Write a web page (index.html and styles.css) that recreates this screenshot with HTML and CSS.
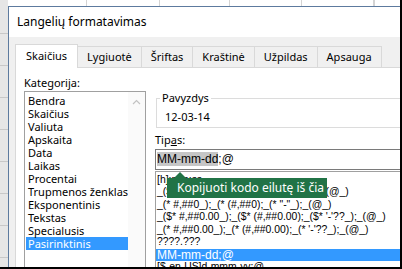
FILE: index.html
```html
<!DOCTYPE html>
<html lang="lt">
<head>
    <meta charset="UTF-8">
    <meta name="viewport" content="width=device-width, initial-scale=1.0">
    <title>Langelių formatavimas</title>
    <link rel="stylesheet" href="styles.css">
</head>
<body>
    <div class="screen">
        <div class="corner"></div>
        <div class="col-heads">
            <span class="col w79"></span>
            <span class="col w73"></span>
            <span class="col w70"></span>
            <span class="col w72"></span>
            <span class="col w72"></span>
            <span class="col"></span>
        </div>
        <div class="row-heads"></div>

        <div class="dialog">
            <div class="titlebar">Langelių formatavimas</div>
            <div class="dialog-body">
                <div class="tabs">
                    <span class="tab active">Skaičius</span>
                    <span class="tab">Lygiuotė</span>
                    <span class="tab">Šriftas</span>
                    <span class="tab">Kraštinė</span>
                    <span class="tab">Užpildas</span>
                    <span class="tab">Apsauga</span>
                </div>
                <div class="panel">
                    <div class="left">
                        <div class="label">Kate<u>g</u>orija:</div>
                        <div class="listbox">
                            <ul class="items">
                                <li>Bendra</li>
                                <li>Skaičius</li>
                                <li>Valiuta</li>
                                <li>Apskaita</li>
                                <li>Data</li>
                                <li>Laikas</li>
                                <li>Procentai</li>
                                <li>Trupmenos ženklas</li>
                                <li>Eksponentinis</li>
                                <li>Tekstas</li>
                                <li>Specialusis</li>
                                <li class="selected">Pasirinktinis</li>
                            </ul>
                            <div class="scrollbar">
                                <svg width="9" height="6" viewBox="0 0 9 6">
                                    <path d="M1 5 L4.5 1.5 L8 5" fill="none" stroke="#c2c2c2" stroke-width="1.2"/>
                                </svg>
                            </div>
                        </div>
                    </div>
                    <div class="right">
                        <div class="sample">
                            <div class="sample-label">Pavyzdys</div>
                            <div class="sample-value">12-03-14</div>
                        </div>
                        <div class="label type-label">Tip<u>a</u>s:</div>
                        <div class="type-input"><span class="sel">MM-mm-dd</span>;@</div>
                        <div class="codes">
                            <ul class="code-list">
                                <li>[h]:mm:ss</li>
                                <li>_($* #,##0_);_($* (#,##0);_($* "-"_);_(@_)</li>
                                <li>_(* #,##0_);_(* (#,##0);_(* "-"_);_(@_)</li>
                                <li>_($* #,##0.00_);_($* (#,##0.00);_($* '-'??_);_(@_)</li>
                                <li>_(* #,##0.00_);_(* (#,##0.00);_(* '-'??_);_(@_)</li>
                                <li>????.???</li>
                                <li class="selected">MM-mm-dd;@</li>
                                <li>[$-en-US]d-mmm-yy;@</li>
                            </ul>
                            <div class="tooltip">Kopijuoti kodo eilutę iš čia</div>
                        </div>
                    </div>
                </div>
            </div>
        </div>
    </div>
</body>
</html>
```

FILE: styles.css
```css
body {
    margin: 0;
    font-family: "Noto Sans", sans-serif;
    font-size: 11px;
    color: #000;
}

.screen {
    width: 402px;
    height: 269px;
    box-sizing: border-box;
    border-right: 2px solid #000;
    border-bottom: 2px solid #000;
    overflow: hidden;
    display: grid;
    grid-template-columns: 8px 1fr;
    grid-template-rows: 6px 1fr;
    background: #fff;
}

.corner {
    background: #e6e6e6;
}

.col-heads {
    display: flex;
    background: #fff;
}

.col {
    box-sizing: border-box;
    border-right: 1px solid #d4d4d4;
    flex: none;
}

.w79 { width: 79px; }
.w73 { width: 73px; }
.w70 { width: 70px; }
.w72 { width: 72px; }

.row-heads {
    background: repeating-linear-gradient(to bottom, transparent 0 31px, #c8c8c8 31px 32px) 0 -4px,
        #e6e6e6;
    border-right: 1px solid #c6c6c6;
    margin-right: -1px;
}

.dialog {
    border-left: 1px solid #5d7a9e;
    border-top: 1px solid #5d7a9e;
    display: flex;
    flex-direction: column;
    min-width: 0;
}

.titlebar {
    height: 30px;
    line-height: 30px;
    padding-left: 8px;
    background: #fff;
    font-size: 12px;
    flex: none;
}

.dialog-body {
    flex: 1;
    background: #f0f0f0;
    padding: 7px 0 0 6px;
}

.tabs {
    display: flex;
    align-items: flex-end;
    height: 23px;
}

.tab {
    box-sizing: border-box;
    height: 21px;
    line-height: 20px;
    padding: 0 9px;
    border: 1px solid #d9d9d9;
    border-bottom: none;
    margin-left: -1px;
    background: #f0f0f0;
}

.tab.active {
    height: 24px;
    margin: 0 0 -1px 0;
    padding: 0 10px;
    background: #fff;
    line-height: 22px;
    position: relative;
    z-index: 1;
}

.panel {
    display: flex;
    gap: 9px;
    background: #fff;
    border: 1px solid #d9d9d9;
    padding: 7px 0 0 8px;
    height: 300px;
    width: 420px;
}

.label {
    line-height: 16px;
}

.left {
    width: 122px;
    flex: none;
}

.listbox {
    display: flex;
    border: 1px solid #a0a0a0;
    height: 200px;
}

.items {
    list-style: none;
    margin: 0 0 0 1px;
    padding: 1.5px 0 0;
    flex: 1;
}

.items li {
    line-height: 13px;
    padding-left: 2px;
    white-space: nowrap;
}

.items li.selected,
.code-list li.selected {
    background: #3399ff;
    color: #fff;
}

.scrollbar {
    width: 17px;
    flex: none;
    background: #fafafa;
    display: flex;
    justify-content: center;
    align-items: flex-start;
    padding-top: 7px;
    box-sizing: border-box;
}

.right {
    flex: 1;
    min-width: 0;
}

.sample {
    margin: 23px 0 0 1px;
    border: 1px solid #dcdcdc;
    padding: 0 0 3px 8px;
}

.sample-label {
    width: max-content;
    margin: -8px 0 0 -5px;
    padding: 0 2px;
    background: #fff;
    line-height: 14px;
}

.sample-value {
    margin-top: 5px;
    line-height: 14px;
}

.type-label {
    margin-top: 5px;
    line-height: 14px;
}

.type-input {
    margin-top: 2px;
    box-sizing: border-box;
    height: 21px;
    border: 1px solid #7a7a7a;
    padding: 1px 1px;
    font-family: "Liberation Sans", sans-serif;
    font-size: 12px;
    line-height: 17px;
}

.sel {
    background: #c6c6c6;
}

.codes {
    position: relative;
    margin-top: 1px;
    border: 1px solid #a0a0a0;
    height: 200px;
}

.code-list {
    list-style: none;
    margin: 0;
    padding: 1.5px 0 0;
    font-family: "Liberation Sans", sans-serif;
    font-size: 10.4px;
}

.code-list li {
    line-height: 12.5px;
    padding-left: 1px;
    white-space: nowrap;
}

.code-list li.selected {
    font-size: 12px;
}

.tooltip {
    position: absolute;
    left: 11px;
    top: 6px;
    width: 160px;
    height: 20px;
    box-sizing: border-box;
    padding-left: 10px;
    line-height: 20px;
    background: #217346;
    color: #fff;
    font-size: 12px;
}

.tooltip::before {
    content: "";
    position: absolute;
    left: 7px;
    top: -6px;
    border-left: 6px solid transparent;
    border-right: 6px solid transparent;
    border-bottom: 6px solid #217346;
}
```
